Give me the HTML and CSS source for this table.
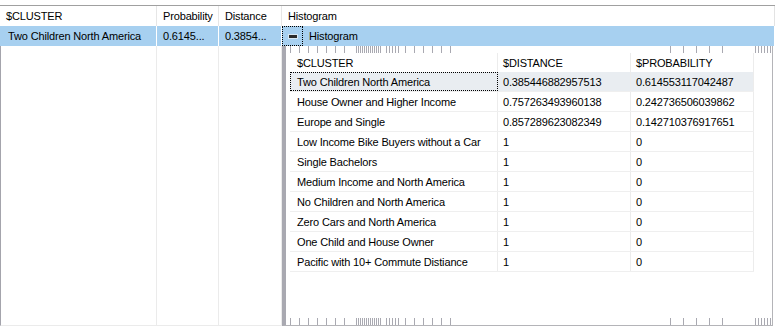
FILE: index.html
```html
<!DOCTYPE html>
<html lang="en">
<head>
    <meta charset="UTF-8">
    <meta name="viewport" content="width=device-width, initial-scale=1.0">
    <title>Cluster Results</title>
    <link rel="stylesheet" href="styles.css">
</head>
<body>
    <div class="grid">
        <div class="grid-head">
            <div class="cell col-cluster">$CLUSTER</div>
            <div class="cell col-prob">Probability</div>
            <div class="cell col-dist">Distance</div>
            <div class="cell col-hist">Histogram</div>
        </div>

        <div class="grid-row selected">
            <div class="cell col-cluster">Two Children North America</div>
            <div class="cell col-prob">0.6145...</div>
            <div class="cell col-dist">0.3854...</div>
            <div class="cell col-hist">
                <span class="toggle"><span class="minus"></span></span>
                <span class="hist-label">Histogram</span>
            </div>
        </div>

        <div class="grid-detail">
            <div class="filler col-cluster"></div>
            <div class="filler col-prob"></div>
            <div class="filler col-dist"></div>

            <div class="detail">
                <div class="ticks"></div>
                <div class="sub-grid">
                    <div class="sub-row sub-head">
                        <div class="sub-cell c1">$CLUSTER</div>
                        <div class="sub-cell c2">$DISTANCE</div>
                        <div class="sub-cell c3">$PROBABILITY</div>
                    </div>
                    <div class="sub-row current">
                        <div class="sub-cell c1 focus">Two Children North America</div>
                        <div class="sub-cell c2">0.385446882957513</div>
                        <div class="sub-cell c3">0.614553117042487</div>
                    </div>
                    <div class="sub-row">
                        <div class="sub-cell c1">House Owner and Higher Income</div>
                        <div class="sub-cell c2">0.757263493960138</div>
                        <div class="sub-cell c3">0.242736506039862</div>
                    </div>
                    <div class="sub-row">
                        <div class="sub-cell c1">Europe and Single</div>
                        <div class="sub-cell c2">0.857289623082349</div>
                        <div class="sub-cell c3">0.142710376917651</div>
                    </div>
                    <div class="sub-row">
                        <div class="sub-cell c1">Low Income Bike Buyers without a Car</div>
                        <div class="sub-cell c2">1</div>
                        <div class="sub-cell c3">0</div>
                    </div>
                    <div class="sub-row">
                        <div class="sub-cell c1">Single Bachelors</div>
                        <div class="sub-cell c2">1</div>
                        <div class="sub-cell c3">0</div>
                    </div>
                    <div class="sub-row">
                        <div class="sub-cell c1">Medium Income and North America</div>
                        <div class="sub-cell c2">1</div>
                        <div class="sub-cell c3">0</div>
                    </div>
                    <div class="sub-row">
                        <div class="sub-cell c1">No Children and North America</div>
                        <div class="sub-cell c2">1</div>
                        <div class="sub-cell c3">0</div>
                    </div>
                    <div class="sub-row">
                        <div class="sub-cell c1">Zero Cars and North America</div>
                        <div class="sub-cell c2">1</div>
                        <div class="sub-cell c3">0</div>
                    </div>
                    <div class="sub-row">
                        <div class="sub-cell c1">One Child and House Owner</div>
                        <div class="sub-cell c2">1</div>
                        <div class="sub-cell c3">0</div>
                    </div>
                    <div class="sub-row">
                        <div class="sub-cell c1">Pacific with 10+ Commute Distiance</div>
                        <div class="sub-cell c2">1</div>
                        <div class="sub-cell c3">0</div>
                    </div>
                </div>
                <div class="ticks"></div>
            </div>
        </div>
    </div>
</body>
</html>
```

FILE: styles.css
```css
body {
    margin: 0;
    background-color: #fff;
    font-family: "Liberation Sans", Arial, sans-serif;
    font-size: 11px;
    letter-spacing: -0.15px;
    color: #000;
}
.grid {
    margin-top: 5px;
    width: 775px;
    border-top: 1px solid #a0a0a0;
}
.grid-head,
.grid-row {
    display: flex;
    height: 20px;
}
.grid-head {
    border-right: 1px solid #e3e3e3;
    width: 774px;
}
.cell {
    box-sizing: border-box;
    display: flex;
    align-items: center;
    white-space: nowrap;
    overflow: hidden;
}
.grid-head .cell {
    border-right: 1px solid #e6e6e6;
    padding-left: 6px;
}
.grid-head .col-hist {
    border-right: none;
}
.grid-row .cell {
    border-right: 1px solid #fff;
    padding-left: 6px;
}
.grid-row .col-cluster {
    padding-left: 8px;
}
.col-cluster {
    width: 157px;
}
.col-prob {
    width: 62px;
}
.col-dist {
    width: 63px;
}
.col-hist {
    width: 492px;
}
.selected {
    width: 774px;
    background-color: #a7d0f0;
}
.grid-row .col-hist {
    padding-left: 0;
    border-right: none;
}
.toggle {
    box-sizing: border-box;
    width: 21px;
    height: 20px;
    border: 1px dotted #000;
    display: flex;
    align-items: center;
    padding-left: 6px;
}
.minus {
    width: 8px;
    height: 3px;
    background-color: #2b2b2b;
    box-shadow: 0 0 0 1px #d8e8f4;
}
.hist-label {
    margin-left: 6px;
}

/* expanded detail area */
.grid-detail {
    display: flex;
    height: 280px;
}
.filler {
    box-sizing: border-box;
    border-right: 1px solid #ebebeb;
    border-bottom: 1px solid #ebebeb;
}
.filler.col-cluster {
    border-left: 1px solid #a4a4ac;
}
.detail {
    box-sizing: border-box;
    width: 491px;
    display: flex;
    flex-direction: column;
    border-left: 4px solid #a9a9b1;
    border-right: 1px solid #b4b4b8;
    border-bottom: 1px solid #b4b4b8;
}
.ticks {
    height: 7px;
    background:
        repeating-linear-gradient(90deg, #a9a9b1 0 1px, transparent 1px 9px) 4px 0 / 56px 100% no-repeat,
        repeating-linear-gradient(90deg, #a9a9b1 0 1px, transparent 1px 2px) 70px 0 / 26px 100% no-repeat,
        repeating-linear-gradient(90deg, #a9a9b1 0 1px, transparent 1px 3px) 100px 0 / 15px 100% no-repeat,
        repeating-linear-gradient(90deg, #a9a9b1 0 1px, transparent 1px 9px) 119px 0 / 47px 100% no-repeat,
        repeating-linear-gradient(90deg, #a9a9b1 0 1px, transparent 1px 13px) 384px 0 / 58px 100% no-repeat,
        repeating-linear-gradient(90deg, #a9a9b1 0 1px, transparent 1px 3px) 469px 0 / 17px 100% no-repeat;
}
.sub-grid {
    flex: 1;
    padding-left: 4px;
}
.sub-row {
    display: flex;
    width: 464px;
    height: 20px;
    box-sizing: border-box;
    border-bottom: 1px solid #efefef;
}
.sub-head {
    height: 19px;
    border-bottom: none;
}
.sub-cell {
    box-sizing: border-box;
    display: flex;
    align-items: center;
    padding-left: 5px;
    border-right: 1px solid #ececec;
    white-space: nowrap;
}
.c1 {
    width: 208px;
    padding-left: 7px;
}
.c2 {
    width: 133px;
}
.c3 {
    width: 123px;
}
.current {
    background-color: #e9edf1;
}
.focus {
    border: 1px dotted #000;
    padding-left: 6px;
}
```
